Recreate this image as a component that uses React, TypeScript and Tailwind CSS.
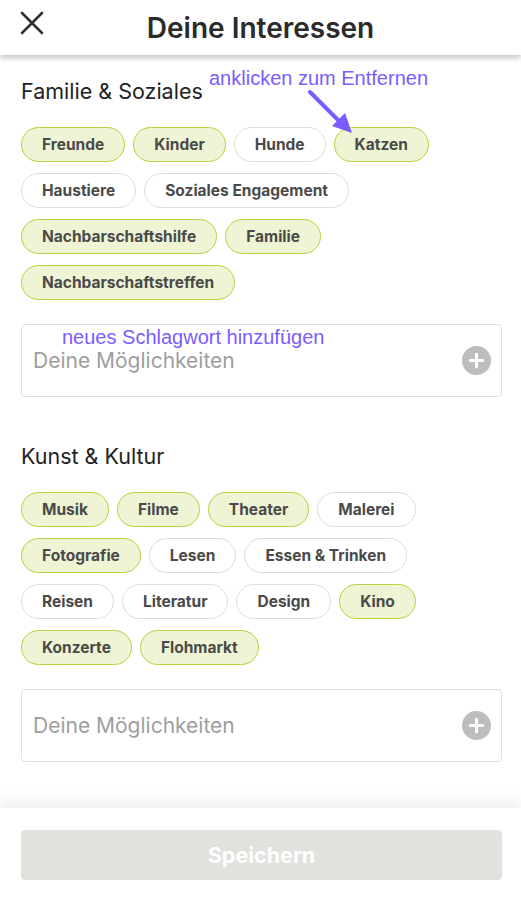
import React from "react";

type Tag = { label: string; active: boolean };

const familie: Tag[] = [
  { label: "Freunde", active: true },
  { label: "Kinder", active: true },
  { label: "Hunde", active: false },
  { label: "Katzen", active: true },
  { label: "Haustiere", active: false },
  { label: "Soziales Engagement", active: false },
  { label: "Nachbarschaftshilfe", active: true },
  { label: "Familie", active: true },
  { label: "Nachbarschaftstreffen", active: true },
];

const kunst: Tag[] = [
  { label: "Musik", active: true },
  { label: "Filme", active: true },
  { label: "Theater", active: true },
  { label: "Malerei", active: false },
  { label: "Fotografie", active: true },
  { label: "Lesen", active: false },
  { label: "Essen & Trinken", active: false },
  { label: "Reisen", active: false },
  { label: "Literatur", active: false },
  { label: "Design", active: false },
  { label: "Kino", active: true },
  { label: "Konzerte", active: true },
  { label: "Flohmarkt", active: true },
];

const ui = { fontFamily: "Inter, 'Noto Sans', sans-serif" };
const note = { fontFamily: "'Liberation Sans', Arial, sans-serif" };

function Chip({ tag }: { tag: Tag }) {
  return (
    <span
      className={`inline-flex h-[35px] items-center rounded-full border-[1.5px] px-5 text-[15.5px] font-bold text-[#4a4a4a] ${
        tag.active ? "border-[#bccf3f] bg-[#eff4d4]" : "border-[#dcdcdc] bg-white"
      }`}
    >
      {tag.label}
    </span>
  );
}

function AddInput() {
  return (
    <div className="flex h-[73px] items-center justify-between rounded-[4px] border border-[#e0e0e0] pl-[11px] pr-[10px]">
      <span className="text-[21px] text-[#9e9e9e]">Deine Möglichkeiten</span>
      <svg width="29" height="29" viewBox="0 0 28 28">
        <circle cx="14" cy="14" r="14" fill="#bdbdbd" />
        <path d="M14 8v12M8 14h12" stroke="#fff" strokeWidth="3" strokeLinecap="round" />
      </svg>
    </div>
  );
}

function Section({ title, tags, className = "" }: { title: string; tags: Tag[]; className?: string }) {
  return (
    <section className={className}>
      <h2 className="text-[21.5px] leading-6 text-[#222]">{title}</h2>
      <div className="mt-6 flex flex-wrap gap-x-2 gap-y-[11px]">
        {tags.map((t) => (
          <Chip key={t.label} tag={t} />
        ))}
      </div>
      <div className="mt-6">
        <AddInput />
      </div>
    </section>
  );
}

export default function App() {
  return (
    <div className="relative flex h-[901px] w-[521px] flex-col overflow-hidden bg-white" style={ui}>
      <header className="relative z-10 flex h-[55px] shrink-0 items-center justify-center bg-white shadow-[0_3px_5px_rgba(0,0,0,0.22)]">
        <svg className="absolute left-[20px] top-[11px]" width="24" height="24" viewBox="0 0 24 24">
          <path d="M2 2l20 20M22 2L2 22" stroke="#333" strokeWidth="2.6" strokeLinecap="round" />
        </svg>
        <h1 className="text-[28px] font-semibold text-[#2b2b2b]">Deine Interessen</h1>
      </header>

      <main className="flex-1 pl-[21px] pr-[19px] pt-6">
        <Section title="Familie & Soziales" tags={familie} />
        <Section title="Kunst & Kultur" tags={kunst} className="mt-[47px]" />
      </main>

      <footer className="z-10 flex h-[93px] shrink-0 items-start bg-white pl-[21px] pr-[19px] pt-[22px] shadow-[0_-8px_14px_rgba(0,0,0,0.06)]">
        <button className="h-[50px] w-full rounded-[4px] bg-[#e1e1dd] text-[21.5px] font-bold text-white">Speichern</button>
      </footer>

      {/* annotations */}
      <span className="absolute left-[209px] top-[63px] text-[20px] text-[#7b5cff]" style={note}>
        anklicken zum Entfernen
      </span>
      <svg className="absolute left-[300px] top-[86px]" width="60" height="54" viewBox="0 0 60 54">
        <path d="M10 6L40 36" stroke="#7b5cff" strokeWidth="4" strokeLinecap="round" />
        <polygon points="52,47 32,40 45,27" fill="#7b5cff" />
      </svg>
      <span className="absolute left-[62px] top-[322px] text-[20px] text-[#7b5cff]" style={note}>
        neues Schlagwort hinzufügen
      </span>
    </div>
  );
}
